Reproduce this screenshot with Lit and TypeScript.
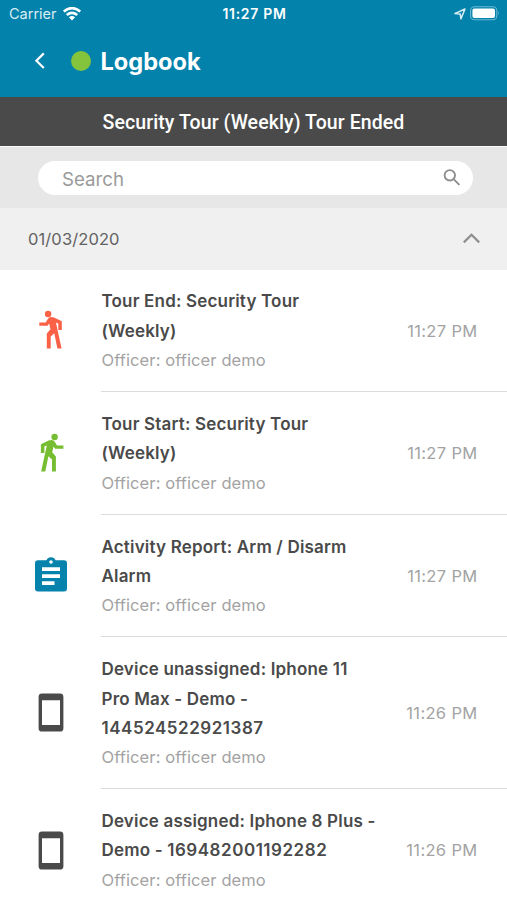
import { LitElement, html, css, svg } from "lit";
import { customElement, property } from "lit/decorators.js";

type Kind = "end" | "start" | "report" | "device";

interface Entry {
  kind: Kind;
  lines: string[];
  time: string;
}

const ENTRIES: Entry[] = [
  { kind: "end", lines: ["Tour End: Security Tour", "(Weekly)"], time: "11:27 PM" },
  { kind: "start", lines: ["Tour Start: Security Tour", "(Weekly)"], time: "11:27 PM" },
  { kind: "report", lines: ["Activity Report: Arm / Disarm", "Alarm"], time: "11:27 PM" },
  { kind: "device", lines: ["Device unassigned: Iphone 11", "Pro Max - Demo -", "144524522921387"], time: "11:26 PM" },
  { kind: "device", lines: ["Device assigned: Iphone 8 Plus -", "Demo - 169482001192282"], time: "11:26 PM" },
];

const walker = svg`
  <circle cx="24.6" cy="4" r="3.2"></circle>
  <path d="M18.6 7.4 L21.7 6.9 Q23.8 7 24.9 9 L27 12.6 H33.4 V15.8 H25.2 L23.5 13.6 L22.2 19.2 L25.9 23.6 V38.5 H22 V26.6 L18.4 23.2 L15.3 38.5 H11.1 L16.8 12.4 L14.4 13.6 V20 H10.9 V11.2 Z"></path>`;

const glyphs = {
  start: svg`<g fill="#76bd31">${walker}</g>`,
  end: svg`<g fill="#fa6147" transform="matrix(-1 0 0 1 42.7 0)">${walker}</g>`,
  report: svg`
    <path fill="#0583ad" fill-rule="evenodd" d="M8 5.2 H16.4 A5 5 0 0 1 25.6 5.2 H34 Q37 5.2 37 8.2 V33.5 Q37 36.5 34 36.5 H8 Q5 36.5 5 33.5 V8.2 Q5 5.2 8 5.2 Z M21 5.2 a1.8 1.8 0 1 0 0 3.6 a1.8 1.8 0 1 0 0 -3.6 Z M12 12.2 V15.9 H30 V12.2 Z M12 19.2 V22.9 H30 V19.2 Z M12 26.2 V29.9 H24.5 V26.2 Z"></path>`,
  device: svg`
    <path fill="#4a4a4a" fill-rule="evenodd" d="M12 1.6 H30 Q33.4 1.6 33.4 5 V36.2 Q33.4 39.6 30 39.6 H12 Q8.6 39.6 8.6 36.2 V5 Q8.6 1.6 12 1.6 Z M12 8.3 V32.9 H30 V8.3 Z"></path>`,
};

/** Splits a title so that long serial numbers can be spaced on their own. */
const titleLine = (line: string) => {
  const m = /^(.*?)(\d{10,})$/.exec(line);
  return m ? html`${m[1]}<span class="serial">${m[2]}</span>` : line;
};

@customElement("log-row")
export class LogRow extends LitElement {
  @property({ attribute: false }) entry!: Entry;

  static styles = css`
    :host { display: flex; align-items: stretch; color: #4a4a4a; }
    .icon { width: 101px; box-sizing: border-box; padding-left: 30px; display: flex; align-items: center; flex: none; }
    .icon svg { width: 42px; height: 42px; display: block; }
    .body { flex: 1; display: flex; align-items: center; padding: 17.73px 29.5px 15.93px 0.5px; border-bottom: 1px solid #dcdcdc; }
    .text { flex: 1; line-height: 29.33px; white-space: nowrap; }
    .title { font-size: 17px; font-weight: 600; letter-spacing: 0.18px; }
    .serial { letter-spacing: 0.53px; }
    .officer { font-size: 16.5px; letter-spacing: 0.1px; color: #a3a3a3; }
    .time { font-size: 16.5px; letter-spacing: 0.33px; color: #a3a3a3; white-space: nowrap; padding-bottom: 1.6px; }
  `;

  render() {
    const { kind, lines, time } = this.entry;
    return html`
      <div class="icon"><svg viewBox="0 0 42 42">${glyphs[kind]}</svg></div>
      <div class="body">
        <div class="text">
          ${lines.map((l) => html`<div class="title">${titleLine(l)}</div>`)}
          <div class="officer">Officer: officer demo</div>
        </div>
        <div class="time">${time}</div>
      </div>
    `;
  }
}

@customElement("app-root")
export class AppRoot extends LitElement {
  static styles = css`
    :host { display: block; height: 900px; overflow: hidden; background: #fff; font-family: Inter, "Liberation Sans", sans-serif; }
    .top { background: #0382ab; color: #fff; height: 97px; }
    .status { display: grid; grid-template-columns: 1fr auto 1fr; align-items: center; height: 27px; padding: 0 7px 0 9px; }
    .left, .right { display: flex; align-items: center; }
    .left { font-size: 14.5px; gap: 6px; color: #d9edf4; }
    .right { justify-content: flex-end; gap: 4px; }
    .clock { font-size: 14px; font-weight: 600; letter-spacing: 0.7px; }
    .nav { display: flex; align-items: center; height: 68px; padding-left: 34px; }
    .dot { width: 20px; height: 20px; border-radius: 50%; background: #84c43c; margin: 0 9.5px 0 25px; }
    .heading { font-size: 23.6px; font-weight: 700; }
    .banner { height: 49px; background: #4a4a4a; color: #fff; display: flex; align-items: center; justify-content: center; font: 500 19.5px Roboto, sans-serif; letter-spacing: 0.09px; padding-top: 1px; box-sizing: border-box; }
    .search { height: 62px; box-sizing: border-box; background: #e7e7e7; border-top: 1px solid #fbfbfb; padding: 14px 34px 13px 37.5px; }
    .field { height: 34px; border-radius: 17px; background: #fff; display: flex; align-items: center; justify-content: space-between; padding: 0 12px 0 24.5px; color: #9a9a9a; font-size: 18.7px; }
    .hint { padding-top: 2px; }
    .date { height: 61.6px; background: #f0f0f0; display: flex; align-items: center; justify-content: space-between; padding: 0 26px 0 28px; color: #626262; font-size: 16.5px; letter-spacing: 0.1px; }
    svg { display: block; }
  `;

  render() {
    return html`
      <div class="top">
        <div class="status">
          <div class="left">
            <span class="carrier">Carrier</span>
            <svg width="18" height="14" viewBox="0 0 18 14" fill="none" stroke="#fff" stroke-width="2.6">
              <path d="M0.8 4.6 Q9 -2.4 17.2 4.6"></path>
              <path d="M3.8 8 Q9 3.8 14.2 8"></path>
              <path d="M5.9 10.2 Q9 8 12.1 10.2 L9 13.4 Z" fill="#fff" stroke="none"></path>
            </svg>
          </div>
          <span class="clock">11:27 PM</span>
          <div class="right">
            <svg width="12" height="12" viewBox="0 0 12 12" fill="none" stroke="#d9edf4" stroke-width="1.5" stroke-linejoin="round">
              <path d="M0.9 5.6 L11 1 L6.9 10.9 L6.2 6 Z"></path>
            </svg>
            <svg width="30" height="15" viewBox="0 0 30 15">
              <rect x="0.6" y="0.7" width="26.2" height="13" rx="3.8" fill="none" stroke="#6fb8d0" stroke-width="1.1"></rect>
              <rect x="2.4" y="2.5" width="22.6" height="9.4" rx="2" fill="#fff"></rect>
              <path d="M28 5.1 Q29.7 7.2 28 9.3 Z" fill="#6fb8d0"></path>
            </svg>
          </div>
        </div>
        <div class="nav">
          <svg width="12" height="18" viewBox="0 0 12 18" fill="none" stroke="#fff" stroke-width="2.2">
            <path d="M9.8 1.4 L2.4 8.7 L9.8 16"></path>
          </svg>
          <span class="dot"></span>
          <span class="heading">Logbook</span>
        </div>
      </div>
      <div class="banner"><span class="notice">Security Tour (Weekly) Tour Ended</span></div>
      <div class="search">
        <div class="field">
          <span class="hint">Search</span>
          <svg width="18" height="18" viewBox="0 0 18 18" fill="none" stroke="#8e8e8e" stroke-width="1.9">
            <circle cx="6.8" cy="6.3" r="5.2"></circle>
            <path d="M10.6 10.1 L16.4 15.9"></path>
          </svg>
        </div>
      </div>
      <div class="date">
        <span class="day">01/03/2020</span>
        <svg width="19" height="12" viewBox="0 0 19 12" fill="none" stroke="#8e8e8e" stroke-width="2.2">
          <path d="M1.8 9.4 L9.5 1.8 L17.2 9.4"></path>
        </svg>
      </div>
      <div class="list">${ENTRIES.map((e) => html`<log-row .entry=${e}></log-row>`)}</div>
    `;
  }
}
